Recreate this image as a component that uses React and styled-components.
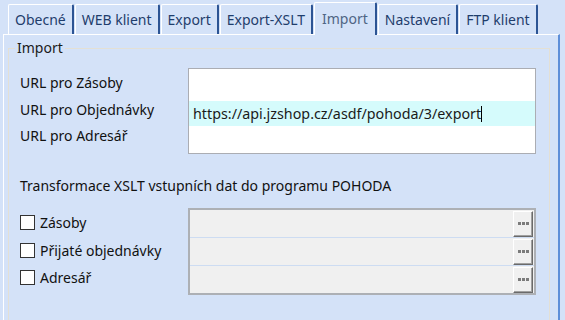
import React from "react";
import styled, { createGlobalStyle } from "styled-components";

const GlobalStyle = createGlobalStyle`
  html, body {
    margin: 0;
    padding: 0;
    background: #d4e2f8;
  }
`;

const tabs = ["Obecné", "WEB klient", "Export", "Export-XSLT", "Import", "Nastavení", "FTP klient"];
const transforms = ["Zásoby", "Přijaté objednávky", "Adresář"];

const App = () => {
  return (
    <Page>
      <GlobalStyle />
      <TabBar>
        {tabs.map((t) => (
          <Tab key={t} active={t === "Import"}>
            {t}
          </Tab>
        ))}
      </TabBar>

      <Panel>
        <Group>
          <Legend>Import</Legend>
          <Form>
            {/* URL labels + multiline input */}
            <UrlLabels>
              <div>URL pro Zásoby</div>
              <div>URL pro Objednávky</div>
              <div>URL pro Adresář</div>
            </UrlLabels>
            <UrlBox>
              <UrlLine />
              <UrlLine current>
                https://api.jzshop.cz/asdf/pohoda/3/export
                <Caret />
              </UrlLine>
              <UrlLine />
            </UrlBox>

            <Heading>Transformace XSLT vstupních dat do programu POHODA</Heading>

            {/* XSLT checkboxes */}
            <CheckList>
              {transforms.map((t) => (
                <CheckRow key={t}>
                  <CheckBox />
                  {t}
                </CheckRow>
              ))}
            </CheckList>
            <FileTable>
              {transforms.map((t) => (
                <FileRow key={t}>
                  <BrowseBtn>
                    <Dots />
                  </BrowseBtn>
                </FileRow>
              ))}
            </FileTable>
          </Form>
        </Group>
      </Panel>
    </Page>
  );
};

const Page = styled.div`
  width: 565px;
  height: 320px;
  overflow: hidden;
  display: flex;
  flex-direction: column;
  background: #d4e2f8;
  font-family: "Noto Sans", "Open Sans", sans-serif;
  font-size: 14px;
  color: #111;
`;
const TabBar = styled.div`
  display: flex;
  align-items: flex-end;
  height: 34px;
  padding-left: 8px;
  gap: 1px;
  flex-shrink: 0;
`;
const Tab = styled.div`
  position: relative;
  z-index: ${(p) => (p.active ? 2 : 1)};
  box-sizing: border-box;
  display: flex;
  align-items: center;
  height: ${(p) => (p.active ? "33px" : "30px")};
  margin-bottom: ${(p) => (p.active ? "-1px" : "0")};
  padding: ${(p) => (p.active ? "0 7px 1px 7px" : "0 6px")};
  background: #d4e2f8;
  border-top: 1px solid #fff;
  border-left: 1px solid #fff;
  border-right: 2px solid #2c5494;
  border-radius: 2px 2px 0 0;
  color: ${(p) => (p.active ? "#4f6584" : "#1f3d6c")};
  white-space: nowrap;
`;
const Panel = styled.div`
  flex: 1;
  box-sizing: border-box;
  width: 557px;
  margin-left: 3px;
  padding: 3px 8px 0 4px;
  border-top: 1px solid #fff;
  border-left: 1px solid #fff;
  border-right: 2px solid #5e8fd9;
`;
const Group = styled.fieldset`
  margin: 0;
  height: 300px;
  padding: 0 6px;
  border: 1px solid #e4e0d4;
`;
const Legend = styled.legend`
  padding: 0 2px;
  line-height: 20px;
  color: #1a1a1a;
`;
const Form = styled.div`
  display: grid;
  grid-template-columns: 168px 348px;
  padding: 10px 0 0 5px;
`;
const UrlLabels = styled.div`
  margin-top: 2px;
  line-height: 26.5px;
`;
const UrlBox = styled.div`
  box-sizing: border-box;
  height: 86px;
  padding-top: 7px;
  background: #fff;
  border: 1px solid #abadb3;
`;
const UrlLine = styled.div`
  display: flex;
  align-items: center;
  height: 25px;
  padding-left: 4px;
  background: ${(p) => (p.current ? "#d5fbfc" : "transparent")};
  color: #1a1a1a;
  font-size: 14.3px;
  white-space: nowrap;
`;
const Caret = styled.span`
  width: 1px;
  height: 16px;
  background: #000;
`;
const Heading = styled.div`
  grid-column: 1 / -1;
  margin: 22px 0 12px;
  line-height: 20px;
`;
const CheckList = styled.div`
  display: flex;
  flex-direction: column;
  padding-top: 1px;
`;
const CheckRow = styled.div`
  display: flex;
  align-items: center;
  gap: 5px;
  height: 27.5px;
`;
const CheckBox = styled.span`
  box-sizing: border-box;
  width: 15px;
  height: 15px;
  background: #fff;
  border: 1px solid #333;
`;
const FileTable = styled.div`
  display: flex;
  flex-direction: column;
  gap: 1px;
  background: #cddcf2;
  border: 2px solid #adb0b5;
`;
const FileRow = styled.div`
  display: flex;
  justify-content: flex-end;
  align-items: center;
  height: 27px;
  padding-right: 1px;
  background: #f0f0f0;
`;
const BrowseBtn = styled.div`
  box-sizing: border-box;
  display: flex;
  align-items: center;
  justify-content: center;
  width: 20px;
  height: 26px;
  background: #f0f0f0;
  border-top: 1px solid #fff;
  border-left: 1px solid #fff;
  border-right: 1px solid #6a6a6a;
  border-bottom: 1px solid #6a6a6a;
  box-shadow: inset -1px -1px 0 #a0a0a0;
`;
const Dots = styled.span`
  width: 11px;
  height: 3px;
  background: repeating-linear-gradient(to right, #7b7b7b 0 3px, transparent 3px 4px);
`;

export default App;
